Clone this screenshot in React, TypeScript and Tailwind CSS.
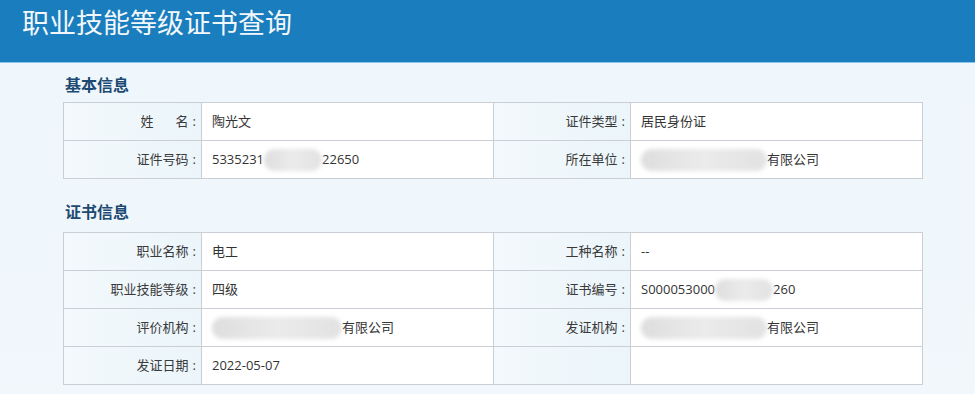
import React from "react";

type Cell = { label: React.ReactNode; value: React.ReactNode };

function Blur({ w, className = "" }: { w: string; className?: string }) {
  return (
    <span
      className={`inline-block h-[22px] ${w} rounded-full bg-gradient-to-r from-[#dedede] via-[#ebebeb] to-[#e2e2e2] blur-[2px] align-middle ${className}`}
    />
  );
}

function Label({ children }: { children: React.ReactNode }) {
  return (
    <div className="flex items-center justify-end pr-[5px] bg-gradient-to-r from-[#f3f9fc] to-[#ebf5fa] border-r border-b border-[#c9cfd4] text-[#3a3a3a]">
      {children}
      {children ? <span className="ml-[4px]">:</span> : null}
    </div>
  );
}

function Value({ children }: { children: React.ReactNode }) {
  return (
    <div className="flex items-center pl-[10px] bg-white border-r border-b border-[#c9cfd4] text-[#333] whitespace-nowrap">
      {children}
    </div>
  );
}

function InfoTable({ rows }: { rows: [Cell, Cell][] }) {
  return (
    <div className="w-[860px] grid grid-cols-[138px_292px_137px_292px] auto-rows-[38px] border-t border-l border-[#c9cfd4] text-[13px]">
      {rows.map(([a, b], i) => (
        <React.Fragment key={i}>
          <Label>{a.label}</Label>
          <Value>{a.value}</Value>
          <Label>{b.label}</Label>
          <Value>{b.value}</Value>
        </React.Fragment>
      ))}
    </div>
  );
}

export default function App() {
  const basic: [Cell, Cell][] = [
    [
      {
        label: (
          <>
            姓<span className="inline-block w-[22px]" />名
          </>
        ),
        value: "陶光文",
      },
      { label: "证件类型", value: "居民身份证" },
    ],
    [
      {
        label: "证件号码",
        value: (
          <>
            5335231
            <Blur w="w-[58px]" />
            22650
          </>
        ),
      },
      {
        label: "所在单位",
        value: (
          <>
            <Blur w="w-[126px]" />
            有限公司
          </>
        ),
      },
    ],
  ];

  const cert: [Cell, Cell][] = [
    [
      { label: "职业名称", value: "电工" },
      { label: "工种名称", value: "--" },
    ],
    [
      { label: "职业技能等级", value: "四级" },
      {
        label: "证书编号",
        value: (
          <>
            S000053000
            <Blur w="w-[58px]" />
            260
          </>
        ),
      },
    ],
    [
      {
        label: "评价机构",
        value: (
          <>
            <Blur w="w-[130px]" />
            有限公司
          </>
        ),
      },
      {
        label: "发证机构",
        value: (
          <>
            <Blur w="w-[126px]" />
            有限公司
          </>
        ),
      },
    ],
    [
      { label: "发证日期", value: "2022-05-07" },
      { label: "", value: "" },
    ],
  ];

  return (
    <div className="min-h-screen bg-gradient-to-b from-[#eef7fc] to-[#f1f7fb] font-['Open_Sans','Noto_Sans_CJK_SC',sans-serif]">
      {/* Header */}
      <header className="h-[63px] bg-[#1a7dbd] border-b border-[#8cc6ea] pl-[22px] pt-[5px]">
        <h1 className="text-[27px] leading-[33px] text-[#f2f7fb] font-['Noto_Sans_CJK_SC',sans-serif]">
          职业技能等级证书查询
        </h1>
      </header>

      <main className="pl-[63px] pt-[10px] pb-[10px]">
        <h2 className="ml-[2px] text-[16px] leading-[24px] font-bold text-[#1d4a72] mb-[5px]">基本信息</h2>
        <InfoTable rows={basic} />

        <h2 className="ml-[2px] mt-[21px] text-[16px] leading-[24px] font-bold text-[#1d4a72] mb-[8px]">证书信息</h2>
        <InfoTable rows={cert} />
      </main>
    </div>
  );
}
